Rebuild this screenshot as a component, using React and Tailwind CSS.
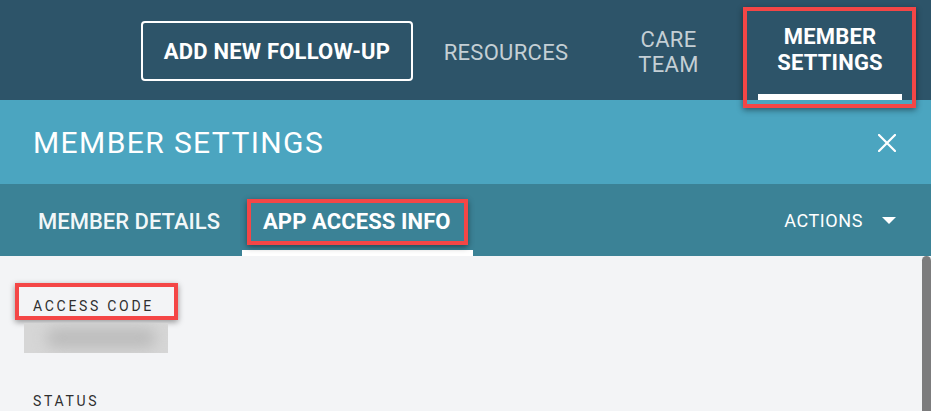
import React from "react";

export default function App() {
  return (
    <div className="w-[931px] h-[411px] overflow-hidden bg-[#f3f4f6] font-['Roboto','Liberation_Sans',sans-serif] flex flex-col">
      {/* Top nav */}
      <div className="h-[100px] shrink-0 bg-[#2d5469] flex items-stretch pl-[141px]">
        <div className="flex items-center">
          <button className="w-[272px] h-[60px] mt-[2px] border-2 border-white rounded-[4px] text-white font-bold text-[22px] tracking-[0.2px] flex items-center justify-center pt-[1px]">
            ADD NEW FOLLOW-UP
          </button>
        </div>
        <div className="w-[186px] flex items-center justify-center text-[#c4cfd5] text-[22px] font-normal tracking-[0.3px] pt-[4px]">
          RESOURCES
        </div>
        <div className="w-[139px] flex flex-col justify-center items-center text-[#c4cfd5] text-[22px] font-normal leading-[25px] tracking-[0.3px] pt-[4px]">
          <span>CARE</span>
          <span>TEAM</span>
        </div>
        <div className="ml-[20px] relative w-[144px] flex flex-col justify-center items-center text-white text-[22px] font-bold leading-[26px] tracking-[0.2px]">
          <span>MEMBER</span>
          <span>SETTINGS</span>
          <div className="absolute left-0 right-0 bottom-0 h-[6px] bg-white" />
          <div className="absolute left-[-15px] right-[-14px] top-[7px] bottom-[-8px] border-[4px] border-[#f44646] shadow-[0_2px_6px_rgba(0,0,0,0.45)]" />
        </div>
      </div>

      {/* Title bar */}
      <div className="h-[84px] shrink-0 bg-[#4ba5c0] flex items-center justify-between pl-[33px] pr-[35px]">
        <h1 className="text-white text-[30px] font-normal tracking-[1.4px] leading-[36px] mt-[1px]">MEMBER SETTINGS</h1>
        <svg width="18" height="18" viewBox="0 0 18 18" className="mt-[1px]">
          <path d="M1 1 L17 17 M17 1 L1 17" stroke="white" strokeWidth="2.2" strokeLinecap="square" />
        </svg>
      </div>

      {/* Tabs bar */}
      <div className="h-[72px] shrink-0 bg-[#3b8296] flex items-stretch pl-[17px] pr-[35px]">
        <div className="pl-[21px] pr-[22px] flex items-center text-white/95 text-[22px] font-medium tracking-[0px] pt-[2px]">
          MEMBER DETAILS
        </div>
        <div className="relative pl-[21px] pr-[22px] flex items-center text-white text-[22px] font-bold tracking-[0.1px] pt-[2px]">
          APP ACCESS INFO
          <div className="absolute left-0 right-0 bottom-0 h-[6px] bg-white" />
          <div className="absolute left-[5px] right-[5px] top-[15px] bottom-[11px] border-[4px] border-[#f44646] shadow-[0_2px_6px_rgba(0,0,0,0.45)]" />
        </div>
        <div className="ml-auto flex items-center gap-[19px] text-white text-[18px] font-normal tracking-[0.6px]">
          <span>ACTIONS</span>
          <svg width="14" height="7" viewBox="0 0 14 7">
            <path d="M0 0 L14 0 L7 7 Z" fill="white" />
          </svg>
        </div>
      </div>

      {/* Content */}
      <div className="flex-1 flex min-h-0">
        <div className="flex-1 flex flex-col items-start pl-[33px] pt-[42px]">
          <div className="relative leading-[16px]">
            <span className="text-[#2f2f2f] text-[14px] tracking-[2.7px]">ACCESS CODE</span>
            <div className="absolute left-[-18px] right-[-24px] top-[-15px] bottom-[-6px] border-[4px] border-[#f44646] shadow-[0_2px_6px_rgba(0,0,0,0.4)]" />
          </div>
          <div className="mt-[9px] ml-[-9px] w-[144px] h-[30px] bg-[#d6d6d6] overflow-hidden relative">
            <div className="absolute left-[22px] top-[5px] w-[110px] h-[20px] rounded-full bg-[#bcbcbc] blur-[7px]" />
          </div>
          <div className="mt-[40px] leading-[16px] text-[#2f2f2f] text-[14px] tracking-[2.7px]">STATUS</div>
        </div>
        <div className="w-[9px] bg-[#7c7c7d] rounded-t-[5px]" />
      </div>
    </div>
  );
}
